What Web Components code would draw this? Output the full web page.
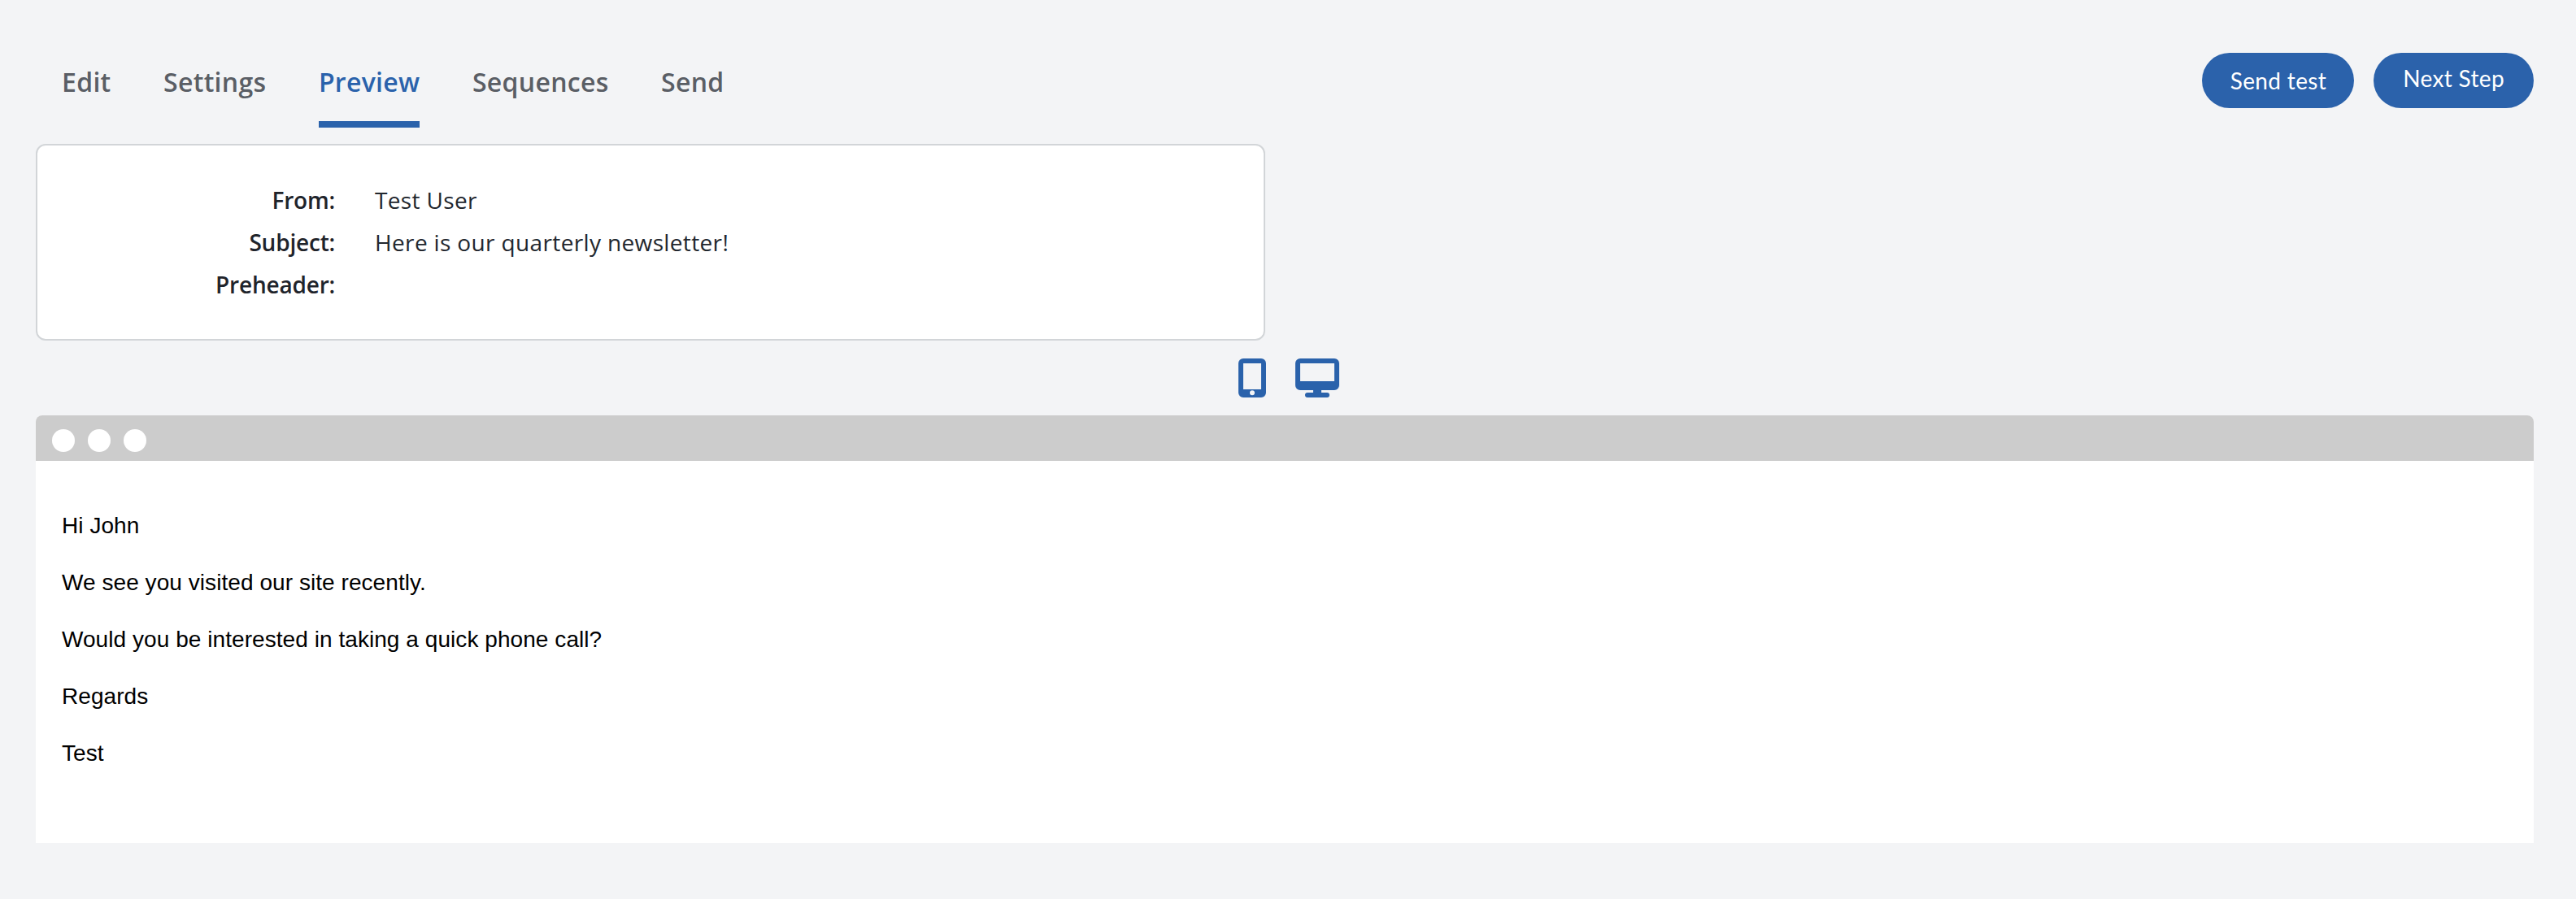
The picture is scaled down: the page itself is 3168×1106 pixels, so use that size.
<!DOCTYPE html>
<html lang="en"><head><meta charset="utf-8"><title>Preview</title>
<style>
html,body{margin:0;padding:0;background:#f3f4f6;}
</style></head><body>
<app-shell>
  <top-bar slot="top">
    <nav-tab>Edit</nav-tab><nav-tab>Settings</nav-tab><nav-tab active>Preview</nav-tab><nav-tab>Sequences</nav-tab><nav-tab>Send</nav-tab>
    <pill-button slot="actions">Send test</pill-button>
    <pill-button slot="actions" raised>Next Step</pill-button>
  </top-bar>
  <meta-card slot="card">
    <meta-row label="From:">Test User</meta-row>
    <meta-row label="Subject:">Here is our quarterly newsletter!</meta-row>
    <meta-row label="Preheader:"></meta-row>
  </meta-card>
  <device-switch slot="switch"></device-switch>
  <browser-frame slot="frame">
    <p>Hi John</p>
    <p>We see you visited our site recently.</p>
    <p>Would you be interested in taking a quick phone call?</p>
    <p>Regards</p>
    <p>Test</p>
  </browser-frame>
</app-shell>
<script>
function def(name, css, html){
  customElements.define(name, class extends HTMLElement{
    constructor(){super();const r=this.attachShadow({mode:'open'});r.innerHTML='<style>'+css+'</style>'+html;}
    connectedCallback(){
      const l=this.shadowRoot.querySelector('.label');
      if(l) l.textContent=this.getAttribute('label')||'';
    }
  });
}
def('app-shell',
 ':host{display:block;box-sizing:border-box;width:3168px;height:1106px;padding:0 52px 0 44px;background:#f3f4f6;}',
 '<slot name="top"></slot><slot name="card"></slot><slot name="switch"></slot><slot name="frame"></slot>');
def('top-bar',
 ':host{display:flex;justify-content:space-between;align-items:flex-start;margin-bottom:20px;}'+
 '.tabs{display:flex;gap:64.500px;padding:79px 0 0 32px;}'+
 '.actions{display:flex;gap:24px;padding-top:65px;}',
 '<div class="tabs"><slot></slot></div><div class="actions"><slot name="actions"></slot></div>');
def('nav-tab',
 ':host{display:block;box-sizing:border-box;font:600 32px/44px "Open Sans",sans-serif;letter-spacing:.3px;color:#5a5e65;padding-bottom:26px;border-bottom:8px solid transparent;}'+
 ':host([active]){color:#2a62ab;border-bottom-color:#2a62ab;}',
 '<slot></slot>');
def('pill-button',
 ':host{display:flex;box-sizing:border-box;height:68px;border-radius:34px;background:#2b62ab;color:#fff;font:400 28px/1 "Lato",sans-serif;letter-spacing:.35px;align-items:center;padding:0 34px 0 35px;white-space:nowrap;}'+
 ':host([raised]){padding:0 36px;}'+
 ':host([raised]) span{position:relative;top:-3px;}',
 '<span><slot></slot></span>');
def('meta-card',
 ':host{display:block;box-sizing:border-box;width:1512px;height:242px;background:#fff;border:2px solid #d2d5d8;border-radius:12px;padding:41px 0 0;}',
 '<slot></slot>');
def('meta-row',
 ':host{display:grid;grid-template-columns:366px 1fr;column-gap:49px;font:400 28px/52px "Open Sans",sans-serif;letter-spacing:.36px;color:#22272e;}'+
 '.label{font-weight:600;text-align:right;color:#1f242b;letter-spacing:-.2px;}',
 '<div class="label"></div><div><slot></slot></div>');
def('device-switch',
 ':host{display:flex;justify-content:center;align-items:flex-start;gap:36px;height:92px;box-sizing:border-box;padding:22px 0 0 10px;}svg{display:block;}',
 '<svg width="34" height="48" viewBox="0 0 34 48" aria-label="Mobile"><path fill="#2a62ab" fill-rule="evenodd" d="M6 0h22a6 6 0 0 1 6 6v36a6 6 0 0 1-6 6H6a6 6 0 0 1-6-6V6a6 6 0 0 1 6-6zM6 6v32h22V6zM17 39.300a3 3 0 1 0 0 6 3 3 0 0 0 0-6z"/></svg>'+
 '<svg width="54" height="48" viewBox="0 0 54 48" aria-label="Desktop"><path fill="#2a62ab" fill-rule="evenodd" d="M6 0h42a6 6 0 0 1 6 6v27a6 6 0 0 1-6 6H32v3h7a3 3 0 0 1 0 6H15a3 3 0 0 1 0-6h7v-3H6a6 6 0 0 1-6-6V6a6 6 0 0 1 6-6zM6 6v22h42V6z"/></svg>');
def('browser-frame',
 ':host{display:block;height:526px;background:#fff;border-radius:8px 8px 0 0;overflow:hidden;}'+
 '.bar{display:flex;gap:16px;align-items:center;height:56px;box-sizing:border-box;padding:6px 0 0 20px;background:#ccc;}'+
 '.bar i{display:block;width:28px;height:28px;border-radius:50%;background:#fff;}'+
 '.body{padding:64px 32px 0;font:400 28px/32px "Liberation Sans",Arial,sans-serif;letter-spacing:.06px;color:#000;}'+
 '::slotted(p){margin:0 0 38px;}',
 '<div class="bar"><i></i><i></i><i></i></div><div class="body"><slot></slot></div>');
</script>
</body></html>
